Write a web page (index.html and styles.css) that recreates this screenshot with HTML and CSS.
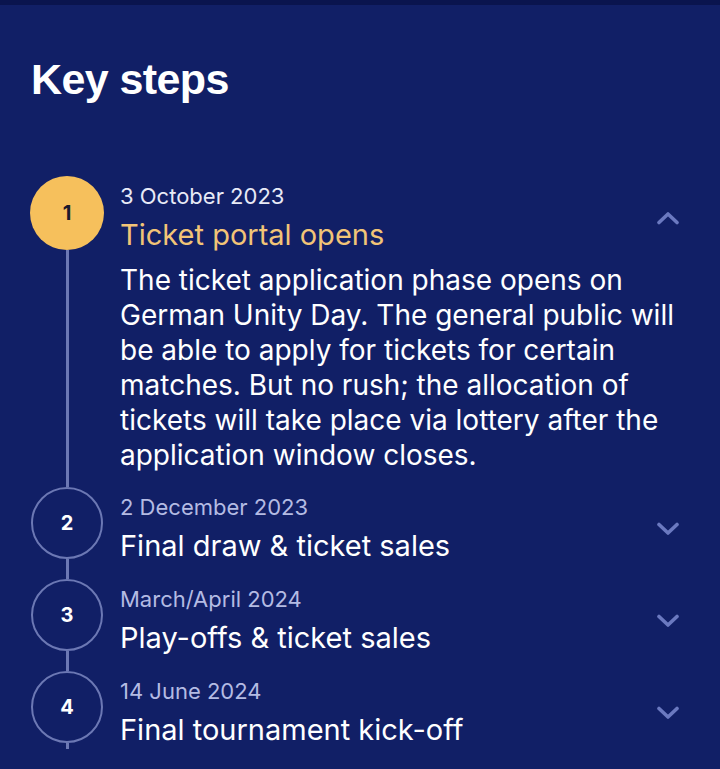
FILE: index.html
```html
<!DOCTYPE html>
<html lang="en">
<head>
<meta charset="utf-8">
<title>Key steps</title>
<link rel="stylesheet" href="styles.css">
</head>
<body>
<div class="topbar"></div>
<main class="page">
  <h1 class="heading">Key steps</h1>
  <ol class="steps">
    <li class="step step--open">
      <div class="marker"><span class="badge badge--active">1</span><span class="rail"></span></div>
      <div class="body">
        <div class="head">
          <div class="titles">
            <p class="date">3 October 2023</p>
            <p class="title">Ticket portal opens</p>
          </div>
          <svg class="chev" viewBox="0 0 24 14" width="24" height="14"><polyline points="3,11.5 12,3 21,11.5"/></svg>
        </div>
        <p class="desc">The ticket application phase opens on German Unity Day. The general public will be able to apply for tickets for certain matches. But no rush; the allocation of tickets will take place via lottery after the application window closes.</p>
      </div>
    </li>
    <li class="step">
      <div class="marker"><span class="badge">2</span><span class="rail"></span></div>
      <div class="body">
        <div class="head">
          <div class="titles">
            <p class="date">2 December 2023</p>
            <p class="title">Final draw &amp; ticket sales</p>
          </div>
          <svg class="chev" viewBox="0 0 24 14" width="24" height="14"><polyline points="3,2.5 12,11 21,2.5"/></svg>
        </div>
      </div>
    </li>
    <li class="step">
      <div class="marker"><span class="badge">3</span><span class="rail"></span></div>
      <div class="body">
        <div class="head">
          <div class="titles">
            <p class="date">March/April 2024</p>
            <p class="title">Play-offs &amp; ticket sales</p>
          </div>
          <svg class="chev" viewBox="0 0 24 14" width="24" height="14"><polyline points="3,2.5 12,11 21,2.5"/></svg>
        </div>
      </div>
    </li>
    <li class="step step--last">
      <div class="marker"><span class="badge">4</span><span class="rail"></span></div>
      <div class="body">
        <div class="head">
          <div class="titles">
            <p class="date">14 June 2024</p>
            <p class="title">Final tournament kick-off</p>
          </div>
          <svg class="chev" viewBox="0 0 24 14" width="24" height="14"><polyline points="3,2.5 12,11 21,2.5"/></svg>
        </div>
      </div>
    </li>
  </ol>
</main>
</body>
</html>
```

FILE: styles.css
```css
html, body {
  margin: 0;
  padding: 0;
  background: #111f66;
  height: 100%;
  overflow: hidden;
}

body {
  font-family: Inter, "Noto Sans", sans-serif;
  color: #ffffff;
}

.topbar {
  height: 5px;
  background: #0a144e;
}

.page {
  padding: 48px 36px 0 30px;
}

.heading {
  margin: 0 0 71px 1px;
  font-family: "Liberation Sans", Arial, sans-serif;
  font-weight: 700;
  font-size: 43px;
  line-height: 52px;
  letter-spacing: -0.6px;
  color: #ffffff;
}

.steps {
  list-style: none;
  margin: 0;
  padding: 0;
}

.step {
  display: grid;
  grid-template-columns: 74px 1fr;
  column-gap: 16px;
}

.marker {
  display: flex;
  flex-direction: column;
  align-items: center;
}

.badge {
  box-sizing: border-box;
  width: 72px;
  height: 72px;
  flex: none;
  border-radius: 50%;
  border: 2.5px solid #6c78b4;
  display: flex;
  align-items: center;
  justify-content: center;
  font-size: 20px;
  font-weight: 700;
  color: #ffffff;
}

.badge--active {
  width: 74px;
  height: 74px;
  border: none;
  background: #f6c05c;
  color: #1c1a2c;
}

.rail {
  flex: 1;
  width: 3px;
  background: #6c78b4;
}

.body {
  padding: 6px 0 14px 0;
}

.step--open .body {
  padding-bottom: 14px;
}

.step--last .body {
  padding-bottom: 0;
}

.head {
  display: flex;
  align-items: center;
  justify-content: space-between;
}

.titles {
  min-width: 0;
}

.date {
  margin: 0;
  font-size: 22px;
  line-height: 28px;
  color: #b4bbe3;
}

.step--open .date {
  color: #e8eaf6;
}

.title {
  margin: 6px 0 0 0;
  font-size: 29px;
  line-height: 38px;
  color: #ffffff;
}

.step--open .title {
  color: #f2c477;
}

.chev {
  flex: none;
  margin-right: 4px;
  fill: none;
  stroke: #6b79c0;
  stroke-width: 3.6;
  stroke-linecap: round;
  stroke-linejoin: round;
}

.desc {
  margin: 9px 0 0 0;
  font-size: 28px;
  line-height: 35px;
  color: #ffffff;
}
```
